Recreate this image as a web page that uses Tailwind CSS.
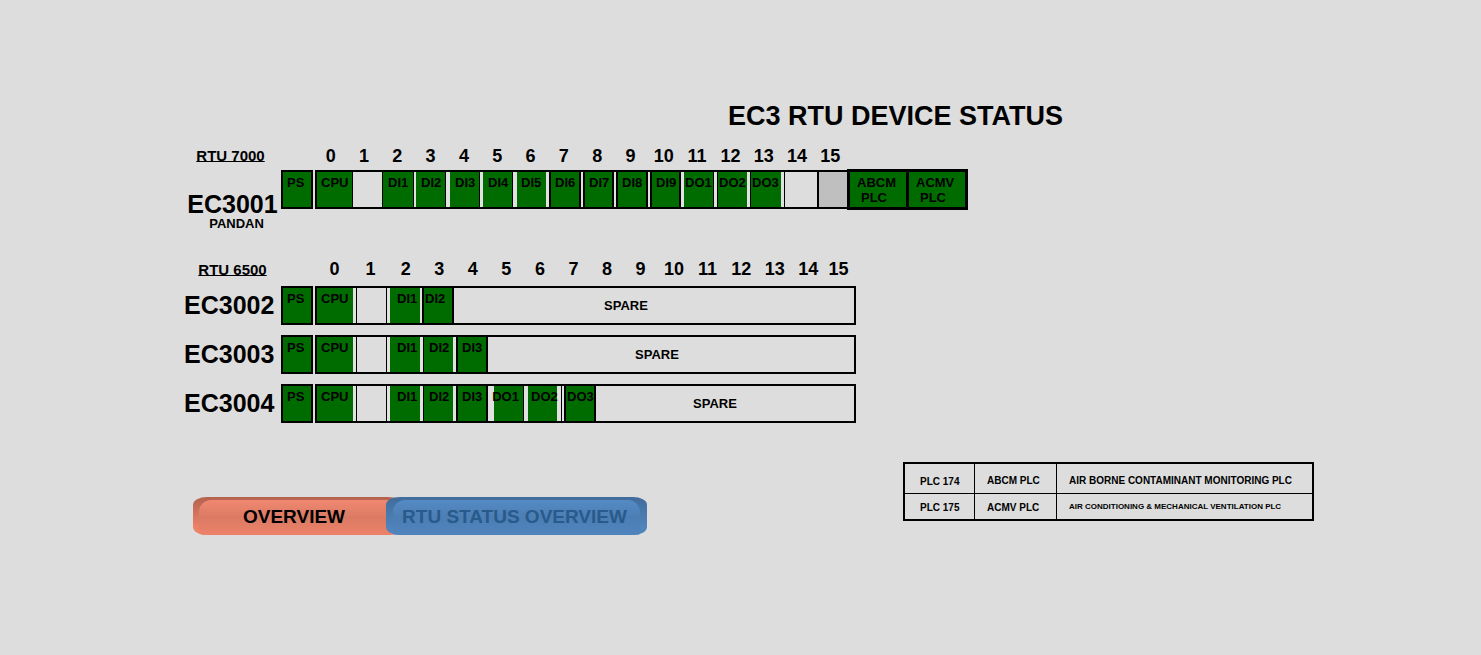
<!DOCTYPE html>
<html lang="en">
<head>
<meta charset="utf-8">
<title>EC3 RTU Device Status</title>
<script src="https://cdn.jsdelivr.net/npm/@tailwindcss/browser@4"></script>
</head>
<body class="min-h-screen bg-[#dddddd] font-['Liberation_Sans',Arial,sans-serif] font-bold text-black whitespace-nowrap">
<main class="pt-[100px]">
  <h1 class="pl-[728px] text-[27px] leading-8">EC3 RTU DEVICE STATUS</h1>

  <!-- RTU 7000 -->
  <section class="mt-[14px] pl-[184px]">
    <div class="flex items-start">
      <h2 class="w-[97px] pt-px pr-1 text-center text-[15px] leading-[18px] underline decoration-1 underline-offset-0">RTU 7000</h2>
      <ol class="ml-[33px] grid w-[533px] grid-cols-16 text-center text-[18px] leading-5">
        <li>0</li><li>1</li><li>2</li><li>3</li><li>4</li><li>5</li><li>6</li><li>7</li><li>8</li><li>9</li><li>10</li><li>11</li><li>12</li><li>13</li><li>14</li><li>15</li>
      </ol>
    </div>
    <div class="mt-[3px] flex items-start text-[13px] leading-[15px]">
      <div class="w-[97px] pt-[23px] text-center">
        <h3 class="text-[25px] leading-6">EC3001</h3>
        <p class="pl-2">PANDAN</p>
      </div>
      <div class="mt-px h-[39px] w-8 border-2 border-black bg-[#006c00] pt-[3px] pl-1">PS</div>
      <div class="mt-px ml-0.5 flex h-[39px] border-2 border-r-0 border-black bg-[#e1e1e1]">
        <div class="w-9 border-r border-black bg-[#006c00] pt-[3px] pl-1">CPU</div>
        <div class="w-[29px] bg-[#dddddd]"></div>
        <div class="w-8 border-x border-black bg-[#006c00] pt-[3px] pl-[5px]">DI1</div>
        <div class="ml-[2px] w-[30px] border-r border-black bg-[#006c00] pt-[3px] pl-[5px]">DI2</div>
        <div class="ml-1 w-[30px] border-r border-black bg-[#006c00] pt-[3px] pl-[5px]">DI3</div>
        <div class="ml-[3px] w-[30px] border-r border-black bg-[#006c00] pt-[3px] pl-[5px]">DI4</div>
        <div class="ml-1 w-[29px] bg-[#006c00] pt-[3px] pl-1">DI5</div>
        <div class="ml-[3px] w-8 border-x-2 border-black bg-[#006c00] pt-[3px] pl-1">DI6</div>
        <div class="ml-[2px] w-[31px] border-x-2 border-black bg-[#006c00] pt-[3px] pl-1">DI7</div>
        <div class="ml-[2px] w-8 border-x-2 border-black bg-[#006c00] pt-[3px] pl-1">DI8</div>
        <div class="ml-[2px] w-[31px] border-x-2 border-black bg-[#006c00] pt-[3px] pl-1">DI9</div>
        <div class="ml-[3px] w-[30px] border-r border-black bg-[#006c00] pt-[3px] pl-px">DO1</div>
        <div class="ml-[3px] w-[30px] border-l border-black bg-[#006c00] pt-[3px] pl-px">DO2</div>
        <div class="ml-[3px] w-[31px] border-l border-black bg-[#006c00] pt-[3px] pl-px">DO3</div>
        <div class="ml-[3px] w-[35px] border-l border-r-2 border-black bg-[#dddddd]"></div>
        <div class="w-7 bg-[#bfbfbf]"></div>
      </div>
      <div class="flex h-[41px] divide-x-3 divide-black border-3 border-black bg-[#006c00]">
        <div class="w-[59px] pt-[3px] pl-[7px]">ABCM<br><span class="pl-1">PLC</span></div>
        <div class="w-[56px] pt-[3px] pl-[7px]">ACMV<br><span class="pl-1">PLC</span></div>
      </div>
    </div>
  </section>

  <!-- RTU 6500 -->
  <section class="mt-7 pl-[184px]">
    <div class="flex items-start">
      <h2 class="w-[97px] pt-0.5 text-center text-[15px] leading-[18px] underline decoration-1 underline-offset-0">RTU 6500</h2>
      <ol class="ml-9 grid w-[535px] grid-cols-[35px_37px_repeat(13,minmax(0,1fr))_27px] text-center text-[18px] leading-5">
        <li>0</li><li>1</li><li>2</li><li>3</li><li>4</li><li>5</li><li>6</li><li>7</li><li>8</li><li>9</li><li>10</li><li>11</li><li>12</li><li>13</li><li>14</li><li>15</li>
      </ol>
    </div>
    <div class="mt-[7px] flex flex-col gap-2.5 text-[13px] leading-[15px]">
      <div class="flex h-[39px]">
        <h3 class="w-[97px] self-center pr-2 pb-0.5 text-center text-[25px] leading-7">EC3002</h3>
        <div class="w-8 border-2 border-black bg-[#006c00] pt-[3px] pl-1">PS</div>
        <div class="ml-0.5 flex w-[541px] border-2 border-black bg-[#e1e1e1]">
          <div class="w-9 bg-[#006c00] pt-[3px] pl-1">CPU</div>
          <div class="ml-[3px] w-[31px] border-x border-black bg-[#dddddd]"></div>
          <div class="ml-[3px] w-[30px] bg-[#006c00] pt-[3px] pl-[7px]">DI1</div>
          <div class="ml-[2px] w-8 border-x-2 border-black bg-[#006c00] pt-[3px] pl-px">DI2</div>
          <div class="flex flex-1 items-center justify-center bg-[#dddddd] pr-14">SPARE</div>
        </div>
      </div>
      <div class="flex h-[39px]">
        <h3 class="w-[97px] self-center pr-2 pb-0.5 text-center text-[25px] leading-7">EC3003</h3>
        <div class="w-8 border-2 border-black bg-[#006c00] pt-[3px] pl-1">PS</div>
        <div class="ml-0.5 flex w-[541px] border-2 border-black bg-[#e1e1e1]">
          <div class="w-9 bg-[#006c00] pt-[3px] pl-1">CPU</div>
          <div class="ml-[3px] w-[31px] border-x border-black bg-[#dddddd]"></div>
          <div class="ml-[3px] w-[30px] bg-[#006c00] pt-[3px] pl-[7px]">DI1</div>
          <div class="ml-[3px] w-[30px] border-l border-black bg-[#006c00] pt-[3px] pl-[5px]">DI2</div>
          <div class="ml-[3px] w-8 border-x-2 border-black bg-[#006c00] pt-[3px] pl-1">DI3</div>
          <div class="flex flex-1 items-center justify-center bg-[#dddddd] pr-7">SPARE</div>
        </div>
      </div>
      <div class="flex h-[39px]">
        <h3 class="w-[97px] self-center pr-2 pb-0.5 text-center text-[25px] leading-7">EC3004</h3>
        <div class="w-8 border-2 border-black bg-[#006c00] pt-[3px] pl-1">PS</div>
        <div class="ml-0.5 flex w-[541px] border-2 border-black bg-[#e1e1e1]">
          <div class="w-9 bg-[#006c00] pt-[3px] pl-1">CPU</div>
          <div class="ml-[3px] w-[31px] border-x border-black bg-[#dddddd]"></div>
          <div class="ml-[3px] w-[30px] bg-[#006c00] pt-[3px] pl-[7px]">DI1</div>
          <div class="ml-[3px] w-[30px] border-l border-black bg-[#006c00] pt-[3px] pl-[5px]">DI2</div>
          <div class="ml-[3px] w-8 border-x-2 border-black bg-[#006c00] pt-[3px] pl-1">DI3</div>
          <div class="ml-1.5 flex w-[30px] justify-center border-r border-black bg-[#006c00] pt-[3px] pr-1.5">DO1</div>
          <div class="ml-1 w-[29px] bg-[#006c00] pt-[3px] pl-[3px]">DO2</div>
          <div class="ml-1 w-px bg-black"></div>
          <div class="ml-[2px] w-8 border-x-2 border-black bg-[#006c00] pt-[3px] pl-px">DO3</div>
          <div class="flex flex-1 items-center justify-center bg-[#dddddd] pr-5">SPARE</div>
        </div>
      </div>
    </div>
  </section>

  <div class="mt-[39px] flex items-start pl-[193px]">
    <nav class="mt-[35px] flex text-[19px]">
      <button type="button" class="h-[38px] w-[209px] overflow-hidden rounded-[14px/8px] bg-linear-to-b from-[#b4624f] to-[#ed8268] to-80% pt-[3px] pl-1.5">
        <span class="flex h-full items-center justify-center rounded-t-xl bg-linear-to-b from-[#f08870] via-[#db7a64] to-[#ed8268] pr-[13px] pb-px">OVERVIEW</span>
      </button>
      <button type="button" class="-ml-4 h-[38px] w-[261px] overflow-hidden rounded-[14px/8px] bg-linear-to-b from-[#416c9b] to-[#5084bd] to-80% px-[7px] pt-[3px] text-[#285a8c]">
        <span class="flex h-full items-center justify-center rounded-t-xl bg-linear-to-b from-[#558ac4] via-[#4c7eb3] to-[#5084bd] pr-1 pb-px">RTU STATUS OVERVIEW</span>
      </button>
    </nav>
    <table class="ml-[256px] w-[411px] table-fixed border-separate border-spacing-0 border-2 border-black text-left text-[10px] leading-3">
      <colgroup><col class="w-[70px]"><col class="w-[82px]"><col></colgroup>
      <tbody>
        <tr class="h-[30px]">
          <th scope="row" class="border-r border-b border-black pt-1.5 pl-[15px]">PLC 174</th>
          <td class="border-r border-b border-black pt-1 pl-3">ABCM PLC</td>
          <td class="border-b border-black pt-1 pl-3">AIR BORNE CONTAMINANT MONITORING PLC</td>
        </tr>
        <tr class="h-[25px]">
          <th scope="row" class="border-r border-black pt-0.5 pl-[15px]">PLC 175</th>
          <td class="border-r border-black pt-0.5 pl-3">ACMV PLC</td>
          <td class="pl-3 text-[8px]">AIR CONDITIONING &amp; MECHANICAL VENTILATION PLC</td>
        </tr>
      </tbody>
    </table>
  </div>
</main>
</body>
</html>
